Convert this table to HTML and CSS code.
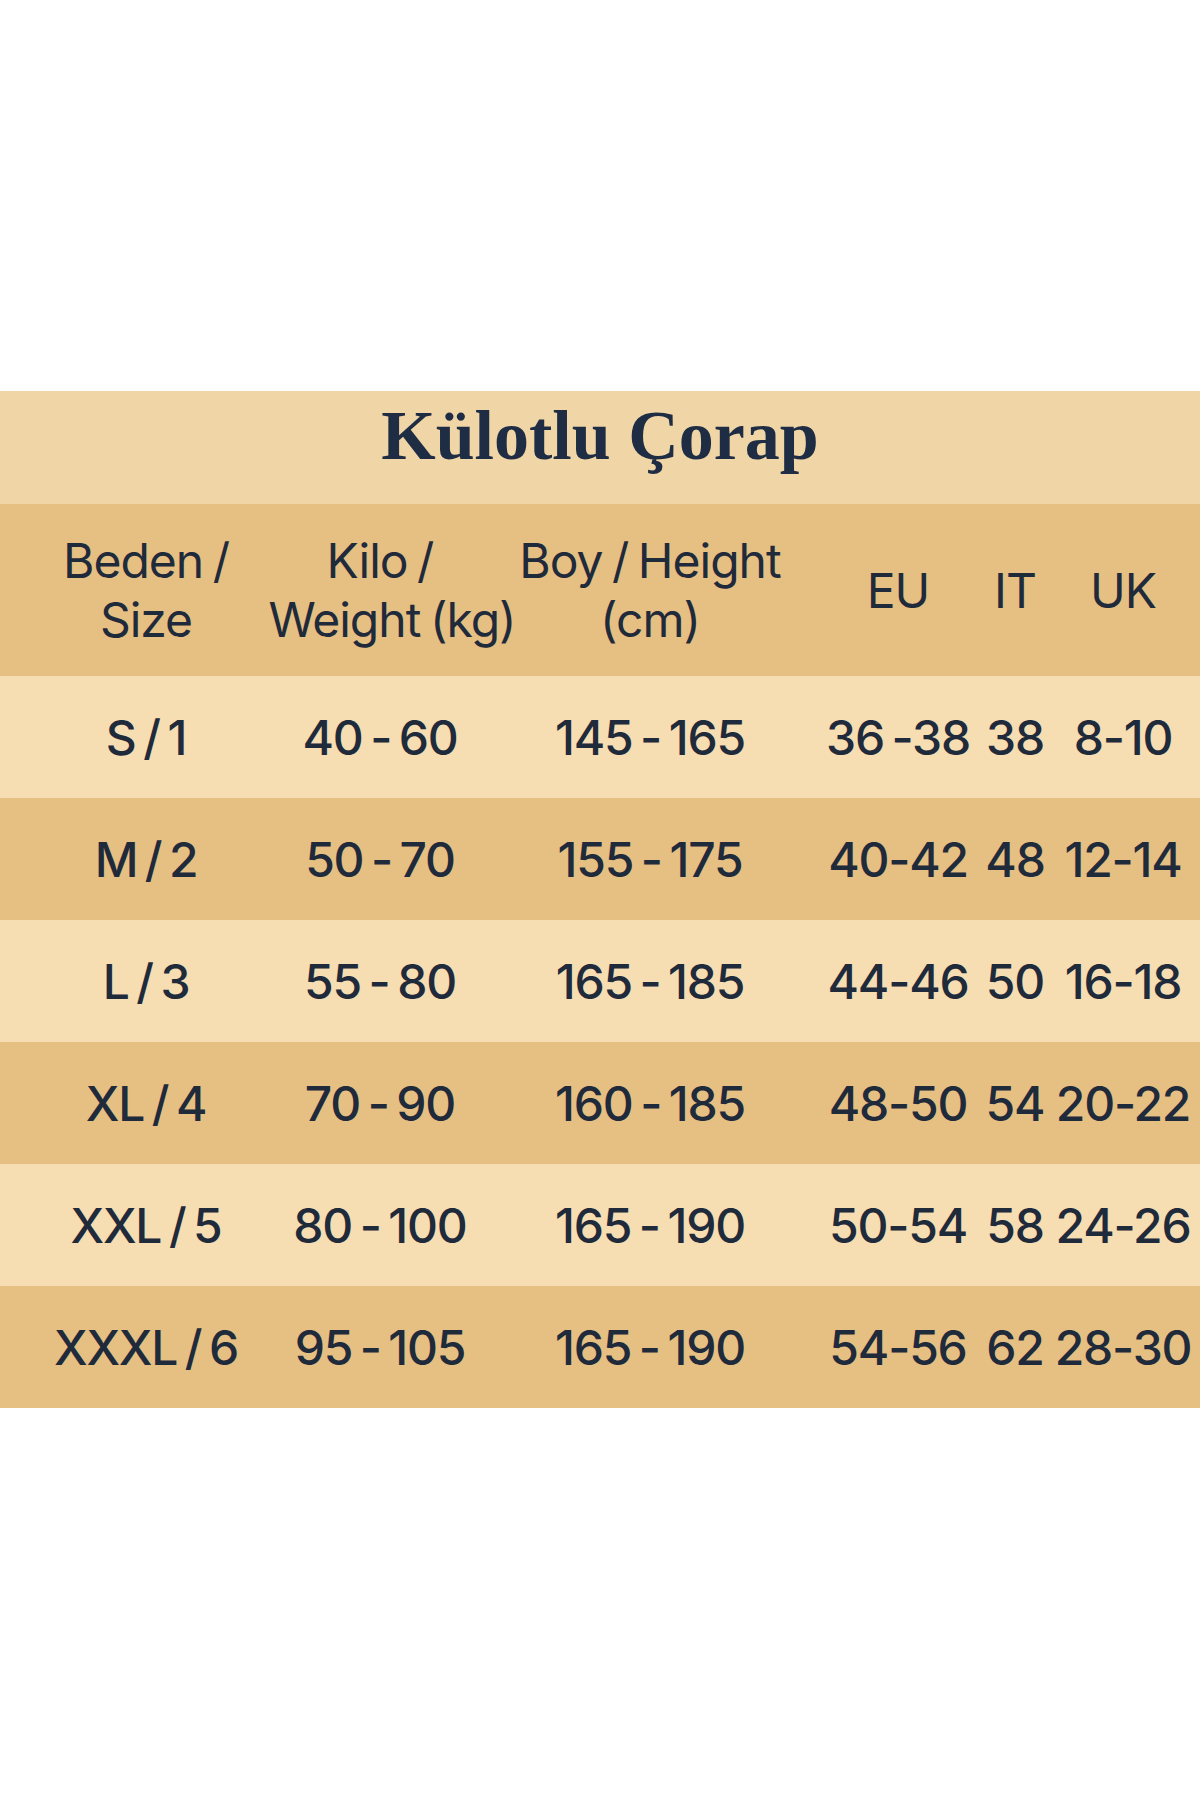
FILE: index.html
```html
<!DOCTYPE html>
<html lang="tr">
<head>
<meta charset="utf-8">
<title>Külotlu Çorap</title>
<link rel="stylesheet" href="styles.css">
</head>
<body>
<div class="page">
  <section class="chart">
    <h1 class="title">Külotlu Çorap</h1>
    <div class="row head">
      <div class="cell"><span>Beden /<br>Size</span></div>
      <div class="cell"><span>Kilo /<br><span class="shift">Weight (kg)</span></span></div>
      <div class="cell"><span>Boy / Height<br>(cm)</span></div>
      <div class="cell"><span>EU</span></div>
      <div class="cell"><span>IT</span></div>
      <div class="cell"><span>UK</span></div>
    </div>
    <div class="row light">
      <div class="cell"><span>S / 1</span></div>
      <div class="cell"><span>40 - 60</span></div>
      <div class="cell"><span>145 - 165</span></div>
      <div class="cell"><span>36 -38</span></div>
      <div class="cell"><span>38</span></div>
      <div class="cell"><span>8-10</span></div>
    </div>
    <div class="row dark">
      <div class="cell"><span>M / 2</span></div>
      <div class="cell"><span>50 - 70</span></div>
      <div class="cell"><span>155 - 175</span></div>
      <div class="cell"><span>40-42</span></div>
      <div class="cell"><span>48</span></div>
      <div class="cell"><span>12-14</span></div>
    </div>
    <div class="row light">
      <div class="cell"><span>L / 3</span></div>
      <div class="cell"><span>55 - 80</span></div>
      <div class="cell"><span>165 - 185</span></div>
      <div class="cell"><span>44-46</span></div>
      <div class="cell"><span>50</span></div>
      <div class="cell"><span>16-18</span></div>
    </div>
    <div class="row dark">
      <div class="cell"><span>XL / 4</span></div>
      <div class="cell"><span>70 - 90</span></div>
      <div class="cell"><span>160 - 185</span></div>
      <div class="cell"><span>48-50</span></div>
      <div class="cell"><span>54</span></div>
      <div class="cell"><span>20-22</span></div>
    </div>
    <div class="row light">
      <div class="cell"><span>XXL / 5</span></div>
      <div class="cell"><span>80 - 100</span></div>
      <div class="cell"><span>165 - 190</span></div>
      <div class="cell"><span>50-54</span></div>
      <div class="cell"><span>58</span></div>
      <div class="cell"><span>24-26</span></div>
    </div>
    <div class="row dark">
      <div class="cell"><span>XXXL / 6</span></div>
      <div class="cell"><span>95 - 105</span></div>
      <div class="cell"><span>165 - 190</span></div>
      <div class="cell"><span>54-56</span></div>
      <div class="cell"><span>62</span></div>
      <div class="cell"><span>28-30</span></div>
    </div>
  </section>
</div>
</body>
</html>
```

FILE: styles.css
```css
html, body {
  margin: 0;
  padding: 0;
  background: #ffffff;
}

.page {
  width: 1200px;
  padding-top: 391px;
}

.chart {
  display: flex;
  flex-direction: column;
  color: #1f2a3b;
  font-family: Inter, "Open Sans", sans-serif;
  font-weight: 450;
}

.title {
  margin: 0;
  height: 113px;
  display: flex;
  align-items: center;
  justify-content: center;
  background: #f0d5a6;
  font-family: "Liberation Serif", serif;
  font-weight: 700;
  font-size: 70px;
  color: #1e2c44;
  letter-spacing: 0;
  padding-bottom: 24px;
  box-sizing: border-box;
}

.row {
  display: grid;
  grid-template-columns: 292px 176px 364px 132px 102px 114px;
  height: 122px;
}

.row.head {
  height: 172px;
  background: #e6bf82;
  line-height: 59px;
}

.row.light {
  background: #f6ddb2;
}

.row.dark {
  background: #e6bf83;
}

.cell {
  display: flex;
  align-items: center;
  justify-content: center;
  min-width: 0;
  font-size: 48px;
  letter-spacing: -1.2px;
  word-spacing: -4px;
}

.head .cell {
  font-size: 48px;
  font-weight: 400;
  letter-spacing: -1px;
  word-spacing: -3px;
}

.cell span {
  white-space: nowrap;
  text-align: center;
}

.cell .shift {
  position: relative;
  left: 12px;
}
```
